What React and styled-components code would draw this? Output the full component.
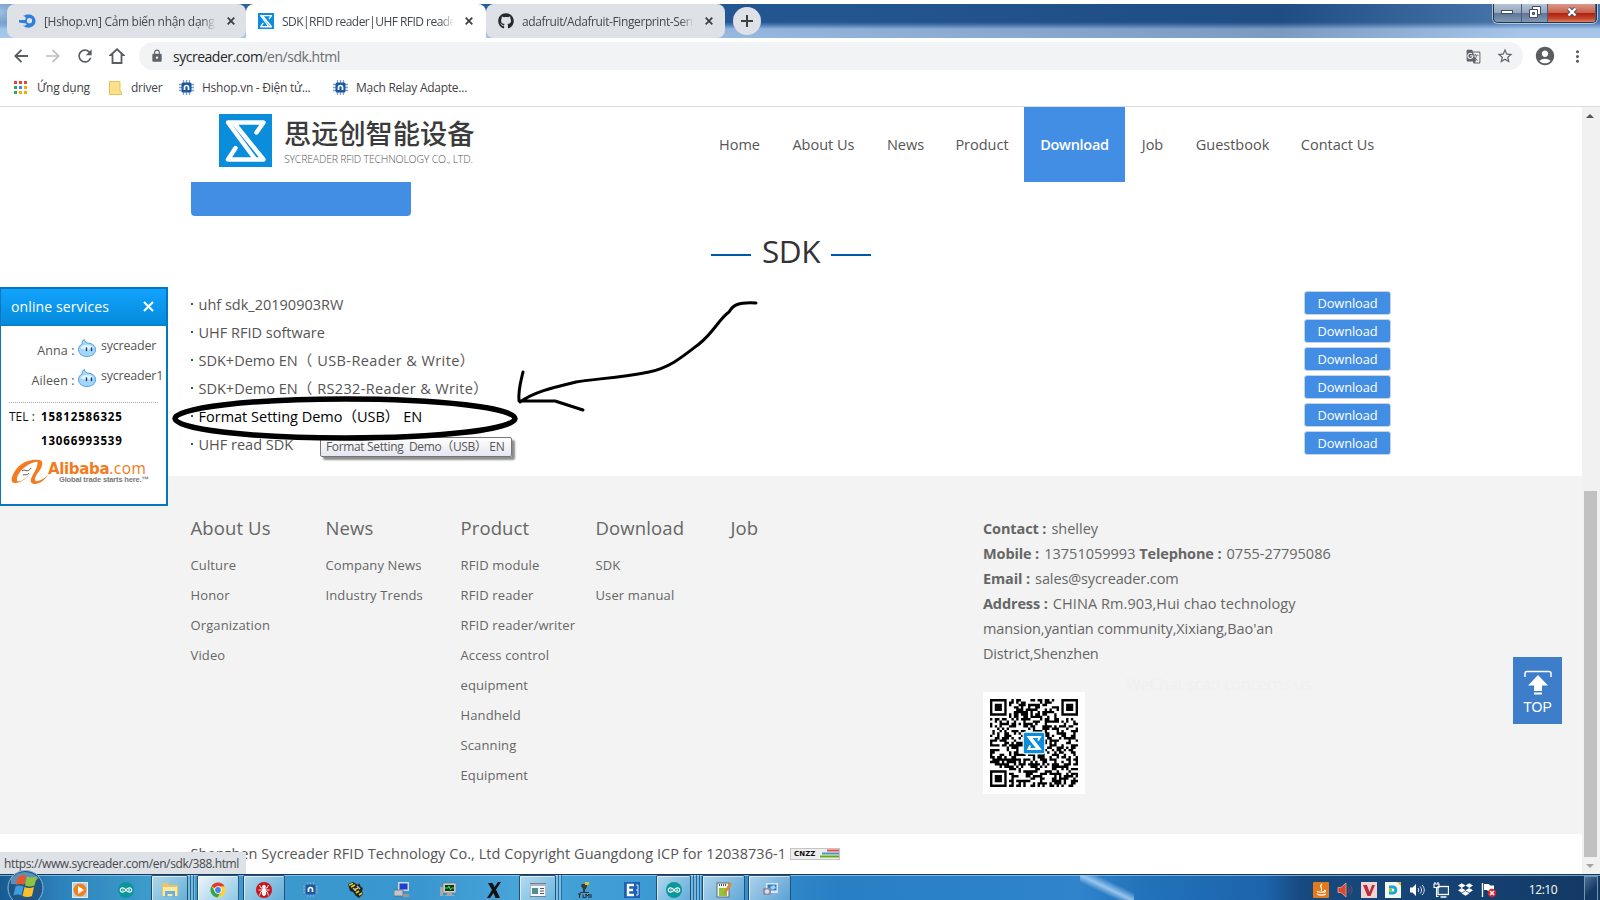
import React from 'react';
import styled, { createGlobalStyle, css } from 'styled-components';
import { FaGithub, FaDropbox } from 'react-icons/fa';
import { MdLock, MdStarBorder, MdAccountCircle, MdMoreVert, MdGTranslate, MdRefresh } from 'react-icons/md';

const Global = createGlobalStyle`
  *{box-sizing:border-box}
  body{margin:0;background:#fff;font-family:"Open Sans","Noto Sans","Noto Sans CJK SC",sans-serif;overflow:hidden}
  svg{display:block;flex:none}
`;

const Screen = styled.div`
  width:1600px;height:900px;display:flex;flex-direction:column;position:relative;overflow:hidden;padding-top:4px;
`;

/* ---------- browser chrome ---------- */
const TabStrip = styled.div`
  height:34px;display:flex;flex:none;padding-left:7px;
  background:
    radial-gradient(ellipse 40px 30px at 0 8px,#9dc0e4,transparent),
    linear-gradient(90deg,rgba(255,255,255,.06),transparent 30%,rgba(10,30,70,.25) 80%,rgba(180,200,225,.25) 95%),
    linear-gradient(#265c98 0,#265c98 18px,#4f82bb 21px,#9fc2ea 25px,#a4c6ed 34px);
`;
const Tab = styled.div`
  width:${p => p.$w}px;height:34px;display:flex;align-items:center;padding:0 0 0 12px;flex:none;
  background:${p => (p.$active ? '#fff' : '#dee1e6')};
  border-radius:${p => (p.$active ? '8px 8px 0 0' : '8px')};
  color:#45494d;font-size:12px;
`;
const TabTitle = styled.div`
  width:172px;margin-left:8px;white-space:nowrap;overflow:hidden;letter-spacing:${p => p.$ls || 0}px;
  mask-image:linear-gradient(90deg,#000 92%,transparent);
`;
const TabClose = styled.div`margin-left:11px;`;
const NewTab = styled.div`
  width:28px;height:28px;border-radius:14px;background:#dee1e6;margin:3px 0 0 8px;display:flex;align-items:center;justify-content:center;
`;
const WindowButtons = styled.div`
  display:flex;height:19px;width:104px;margin:0 3px 0 auto;border:1px solid #23364f;border-top:0;border-radius:0 0 5px 5px;overflow:hidden;
  box-shadow:0 0 0 1px rgba(255,255,255,.55);
`;
const WinBtn = styled.div`
  width:${p => p.$w}px;display:flex;align-items:center;justify-content:center;padding-bottom:2px;
  border-right:1px solid #4a5d78;
  background:${p => (p.$close
    ? 'linear-gradient(#d99a8d 0,#c9614c 48%,#ad2310 52%,#c5452a 80%,#dd8465)'
    : 'linear-gradient(#b5c3d5 0,#93a7c0 48%,#5e7799 52%,#8298b4)')};
`;
const Toolbar = styled.div`
  height:36px;flex:none;display:flex;align-items:center;background:#fff;padding-left:5px;
`;
const NavIcon = styled.div`
  width:32px;display:flex;justify-content:center;color:${p => (p.$dim ? '#bbbdc0' : '#5a5e62')};
`;
const Omnibox = styled.div`
  width:1384px;height:28px;margin-left:6px;border-radius:14px;background:#f1f3f4;display:flex;align-items:center;
  padding:0 2px 0 11px;color:#5f6368;font-size:14px;
`;
const Url = styled.div`
  margin-left:9px;flex:1;letter-spacing:-.48px;color:#6a6e72;
  b{font-weight:400;color:#26282b}
`;
const OmniIcon = styled.div`width:32px;display:flex;justify-content:center;`;
const SideIcon = styled.div`width:${p => p.$w}px;display:flex;justify-content:center;color:#5a5e62;`;
const Bookmarks = styled.div`
  height:33px;flex:none;display:flex;align-items:center;border-bottom:1px solid #dcdcdc;padding:0 0 5px 14px;font-size:12px;color:#3f4347;
`;
const Bookmark = styled.div`
  display:flex;align-items:center;width:${p => p.$w}px;gap:${p => p.$gap}px;letter-spacing:-.25px;white-space:nowrap;
`;

/* ---------- page ---------- */
const Viewport = styled.div`display:flex;height:767px;flex:none;`;
const Page = styled.div`width:1582px;display:flex;flex-direction:column;`;
const Container = styled.div`width:1200px;margin:0 auto;`;
const Header = styled.div`height:75px;display:flex;padding-left:28px;`;
const LogoText = styled.div`margin:7px 0 0 12px;width:246px;color:#3b3b3b;white-space:nowrap;`;
const LogoName = styled.div`font:500 27.200px/36px "Noto Sans CJK SC",sans-serif;`;
const LogoSub = styled.div`font:300 10.500px/12px "Open Sans",sans-serif;color:#555;letter-spacing:-.2px;margin-top:3px;`;
const Nav = styled.div`display:flex;margin-left:173px;`;
const NavItem = styled.div`
  width:${p => p.$w}px;height:75px;display:flex;align-items:center;justify-content:center;font-size:14.500px;white-space:nowrap;
  color:#555;letter-spacing:0;
  ${p => p.$on && css`background:#438ee5;color:#fff;font-weight:600;letter-spacing:-.28px;`}
`;
const BlueBar = styled.div`width:220px;height:34px;background:#438ee5;border-radius:0 0 4px 4px;`;
const Title = styled.div`
  height:71px;display:flex;align-items:center;justify-content:center;gap:11px;font-size:31.500px;color:#333;letter-spacing:-.4px;padding-bottom:2px;
`;
const Dash = styled.span`width:40px;height:2px;background:#0058a8;margin-top:8px;`;
const List = styled.div`height:189px;padding-top:3px;`;
const Row = styled.div`
  height:28px;display:flex;align-items:center;font-size:14.500px;color:${p => (p.$hover ? '#000' : '#555')};white-space:pre;
`;
const Dot = styled.span`width:2px;height:2px;background:#136a4a;margin:0 5.500px 0 0;`;
const RowText = styled.span`
  flex:1;height:20px;display:flex;line-height:20px;margin-top:2px;
`;
const Part = styled.span`
  letter-spacing:${p => p.$ls || 0}px;margin-left:${p => p.$ml || 0}px;height:20px;line-height:20px;
`;
const DownloadBtn = styled.span`
  width:87px;height:24px;margin-bottom:3px;border:1px solid #c9d3df;border-radius:3px;background:#438ee5;color:#fff;font-size:12.800px;
  font-weight:500;letter-spacing:-.1px;display:flex;align-items:center;justify-content:center;
`;
const Footer = styled.div`height:358px;background:#f3f3f3;`;
const FooterInner = styled(Container)`display:flex;padding-top:37px;`;
const Column = styled.div`width:135px;color:#666;`;
const ColHead = styled.div`font-size:18.500px;line-height:30px;margin:0 0 7px -.5px;letter-spacing:.12px;`;
const ColItem = styled.div`font-size:13px;line-height:30px;white-space:nowrap;letter-spacing:.13px;margin-left:-.5px;`;
const Contact = styled.div`margin-left:117px;width:400px;font-size:14.500px;color:#666;`;
const ContactLine = styled.div`
  height:25px;line-height:31px;white-space:nowrap;letter-spacing:${p => p.$ls || 0}px;
  b{letter-spacing:-.13px;margin-right:1.500px}
`;
const ScanHint = styled.div`height:29px;padding:11px 0 0 143px;font-size:16px;line-height:20px;color:#f0f0f0;white-space:nowrap;letter-spacing:-.2px;`;
const QrBox = styled.div`width:102px;height:102px;background:#fff;padding:7px;`;
const Copyright = styled.div`
  height:40px;padding:0 0 2px 190.500px;display:flex;align-items:center;gap:4px;font-size:14.500px;color:#555;white-space:nowrap;letter-spacing:.05px;
`;
const Cnzz = styled.div`
  width:50px;height:12px;background:#eee;border:1px solid #c4c4c4;display:flex;align-items:center;justify-content:space-between;
  font:700 7px/8px "DejaVu Sans",sans-serif;color:#111;padding-left:3px;margin-bottom:-1px;
`;
const Scrollbar = styled.div`
  width:18px;background:#f1f1f1;display:flex;flex-direction:column;align-items:center;justify-content:space-between;padding-right:2px;
`;
const ScrollThumb = styled.div`width:13px;height:366px;background:#c1c1c1;margin-top:auto;`;
const ScrollArrow = styled.div`height:17px;display:flex;align-items:center;`;

/* ---------- floating parts ---------- */
const Widget = styled.div`
  position:absolute;left:0;top:287px;width:168px;height:219px;background:#fff;border:2px solid #0478bd;border-left-width:1px;
`;
const WidgetHead = styled.div`
  height:37px;background:linear-gradient(#12a3fd,#048bdc);border-bottom:2px solid #0482cc;display:flex;align-items:center;
  justify-content:space-between;padding:0 12px 0 10px;color:#fff;font-size:14px;letter-spacing:.12px;
`;
const Agent = styled.div`
  display:flex;height:30px;font-size:12.500px;line-height:17px;color:#555;padding-top:7px;
`;
const AgentLabel = styled.span`width:77px;text-align:right;padding-top:9px;letter-spacing:.1px;white-space:pre;`;
const AgentName = styled.span`margin-left:5px;padding-top:4px;letter-spacing:-.2px;`;
const AgentIcon = styled.div`margin:6px 0 0 0;`;
const Tel = styled.div`
  height:24px;display:flex;align-items:center;padding-left:8px;font-size:12px;color:#111;
  b{font:700 11.500px "Noto Sans",sans-serif;color:#000;letter-spacing:.85px}
`;
const TelLabel = styled.span`width:32px;white-space:pre;`;
const Dotted = styled.div`width:149px;border-top:1px dotted #aaa;margin:16px 0 1px 8px;`;
const Alibaba = styled.div`display:flex;padding:6px 0 0 9px;`;
const AliWord = styled.div`
  font:700 15px/16px "DejaVu Sans",sans-serif;color:#f47a20;letter-spacing:-.35px;white-space:nowrap;margin:2px 0 0 0;
`;
const AliCom = styled.span`font-weight:400;font-size:15.500px;font-family:"Open Sans",sans-serif;letter-spacing:.5px;`;
const AliTag = styled.div`font:700 7.500px/8px "Liberation Sans",sans-serif;color:#777;letter-spacing:-.15px;margin:-1px 0 0 11px;`;
const TopButton = styled.div`
  position:absolute;left:1513px;top:657px;width:49px;height:67px;background:#3e7dca;color:#fff;display:flex;flex-direction:column;
  align-items:center;padding-top:13px;font:14px/18px "Liberation Sans",sans-serif;
`;
const Tooltip = styled.div`
  position:absolute;left:320px;top:437px;width:192px;height:20px;border:1px solid #767676;border-radius:2px;white-space:pre;
  background:linear-gradient(#fff,#e4e5f0);box-shadow:3px 3px 2px rgba(0,0,0,.45);font-size:12px;line-height:18px;color:#575757;padding-left:5px;
  letter-spacing:-.35px;
`;
const StatusBubble = styled.div`
  position:absolute;left:0;top:852px;width:246px;height:22px;background:#dee1e6;border-top-right-radius:3px;color:#45494d;font-size:12px;
  line-height:23px;padding-left:4px;letter-spacing:-.37px;
`;
const Ink = styled.svg`position:absolute;left:160px;top:290px;`;
const StartOrb = styled.svg`position:absolute;left:7px;top:868px;`;

/* ---------- taskbar ---------- */
const Taskbar = styled.div`
  height:26px;display:flex;flex:none;border-top:1px solid #173a5c;box-shadow:inset 0 1px 0 rgba(160,205,240,.7);
  background:
    linear-gradient(to top right,transparent 36%,rgba(190,222,250,.75) 50%,transparent 66%) 1080px 0/54px 26px no-repeat,
    linear-gradient(90deg,#175a92 0,#2d82bb 60px,#3d9ccc 150px,#3a96cf 420px,#47a5da 520px,#3793cf 720px,#287fc4 840px,#2f84cb 1080px,#2273ba 1140px,#1d64ac 1265px,#174a80 1300px,#143f6e 1500px,#123963 1600px);
`;
const Slot = styled.div`
  width:${p => p.$w}px;margin-left:${p => p.$m || 0}px;height:25px;display:flex;align-items:center;justify-content:center;padding-top:4px;
  ${p => p.$open && css`
    background:linear-gradient(135deg,rgba(255,255,255,.6),rgba(255,255,255,.22));
    border:1px solid rgba(10,50,90,.8);border-bottom:0;border-radius:2px 2px 0 0;box-shadow:inset 1px 1px 0 rgba(255,255,255,.6);`}
  ${p => p.$bright && css`background:linear-gradient(135deg,rgba(255,255,255,.9),rgba(200,230,245,.6));`}
`;
const Stack = styled.div`
  width:${p => p.$w}px;height:25px;background:repeating-linear-gradient(90deg,rgba(255,255,255,.3) 0 2px,rgba(10,60,100,.5) 2px 3px);
`;
const Tray = styled.div`margin-left:auto;display:flex;align-items:center;padding-top:4px;`;
const TrayIcon = styled.div`width:24px;display:flex;justify-content:center;color:#fff;`;
const Clock = styled.div`width:80px;margin-left:2px;text-align:center;color:#fff;font-size:12px;letter-spacing:-.45px;`;
const ShowDesktop = styled.div`width:14px;height:25px;margin:-3px 2px 0 1px;border:1px solid #7796b5;background:linear-gradient(135deg,#4c7299,#143a63 60%);`;

const Cross = ({ s = 8, c = '#3c4043', w = 1.8 }) => (
  <svg width={s} height={s} viewBox="0 0 8 8"><path d="M.7.7l6.6 6.6M7.3.7L.7 7.3" stroke={c} strokeWidth={w} /></svg>
);
const SycLogo = ({ s }) => (
  <svg width={s} height={s} viewBox="0 0 53 53">
    <rect width="53" height="53" fill="#0a8ddb" />
    <path d="M37.500 18.500L44.500 8.500H9L36 45M16.500 34L9 45.500H44.500L15 9" fill="none" stroke="#fff" strokeWidth="4.400" strokeLinecap="round" strokeLinejoin="round" />
  </svg>
);
const Chip = () => (
  <svg width="15" height="15" viewBox="0 0 15 15">
    <path d="M4.500 0v15M7.500 0v15M10.500 0v15M0 4.500h15M0 7.500h15M0 10.500h15" stroke="#7fa3cc" strokeWidth="1.300" />
    <rect x="2.500" y="2.500" width="10" height="10" rx="1.500" fill="#1c58a0" />
    <path d="M5.500 10V7.500a2 2 0 014 0V10" fill="none" stroke="#fff" strokeWidth="1.700" />
  </svg>
);
const Arduino = () => (
  <svg width="16" height="16" viewBox="0 0 16 16">
    <circle cx="8" cy="8" r="8" fill="#0a979c" />
    <path d="M8 8C6.500 5.500 2.300 5 2.300 8S6.500 10.500 8 8s5.700-3 5.700 0S9.500 10.500 8 8z" fill="none" stroke="#fff" strokeWidth="1.200" />
    <path d="M4 8h1.800M10.200 8H12M11.100 7.100v1.800" stroke="#fff" strokeWidth=".8" />
  </svg>
);
const ChromeIcon = () => (
  <svg width="16" height="16" viewBox="0 0 16 16">
    <circle cx="8" cy="8" r="7.500" fill="#fdd139" />
    <path d="M8 8L1.500 4.250A7.500 7.500 0 0114.500 4.250L8 4.500z" fill="#df3d30" />
    <path d="M1.500 4.250A7.500 7.500 0 007.500 15.500L11 9.700 5 9.800z" fill="#34a350" />
    <circle cx="8" cy="8" r="3.700" fill="#fff" /><circle cx="8" cy="8" r="2.900" fill="#4384f3" />
  </svg>
);
const Wangwang = () => (
  <svg width="18" height="18" viewBox="0 0 18 18">
    <path d="M9 4C8 2 6 3 6.500.500 4 1.500 4 3 4.500 4.500 2 6 .5 8 .5 10.500.500 15 4.500 17.500 9 17.500s8.500-2.500 8.500-7S13 4 9 4z" fill="#a6d5fb" stroke="#4d9fe0" />
    <path d="M2.500 9c2-4 10-4.500 13 0-3 2-9 2-13 0z" fill="#e4f4ff" />
    <path d="M8.500 9v2.500M13.500 9v2.500" stroke="#123a6a" strokeWidth="1.400" strokeLinecap="round" />
  </svg>
);
const AliMark = () => (
  <svg width="38" height="28" viewBox="0 0 38 28">
    <path d="M32 3C25 0 12 2 5 13c-5 8-4 12 0 12 6 0 12-5 15-9C12 24 6 26 7 20 9 12 20 3 32 3z" fill="#f4791f" />
    <path d="M27 2c8-1 6 7 0 14-3 5-3 8 1 7 4-1 8-4 10-6-4 7-14 12-17 7-2-5 9-14 6-22z" fill="#f4791f" />
    <path d="M12 13c3-3 5 3 9-3M13 17c3-1 4 1 6-2" fill="none" stroke="#555" />
  </svg>
);

/* Version 5 code: 37 modules a side with three finder marks */
const QR_SIZE = 37;
const qrPath = (() => {
  let seed = 91;
  let d = '';
  const finder = (x, y) => {
    const m = Math.max(Math.abs(x - 3), Math.abs(y - 3));
    return m === 3 || m <= 1;
  };
  for (let y = 0; y < QR_SIZE; y += 1) {
    for (let x = 0; x < QR_SIZE; x += 1) {
      seed = (seed * 1103515245 + 12345) % 2147483648;
      let on = ((seed >> 14) & 255) < 128;
      const fx = x < 8 ? x : x > 28 ? x - 30 : -9;
      const fy = y < 8 ? y : y > 28 ? y - 30 : -9;
      if (fx > -9 && fy > -9 && !(x > 28 && y > 28)) on = fx >= 0 && fx < 7 && fy >= 0 && fy < 7 && finder(fx, fy);
      if (on) d += `M${x} ${y}h1v1h-1z`;
    }
  }
  return d;
})();
const Qr = () => (
  <svg width="88" height="88" viewBox="0 0 37 37">
    <path d={qrPath} fill="#000" />
    <rect x="13.700" y="13.700" width="9.600" height="9.600" rx="1" fill="#dfeaf3" />
    <svg x="14.200" y="14.200" width="8.600" height="8.600" viewBox="0 0 53 53">
      <rect width="53" height="53" rx="4" fill="#0a8ddb" />
      <path d="M37 20L42 11H12L36 42M17 33L12 42H42L18 11" fill="none" stroke="#fff" strokeWidth="5" />
    </svg>
  </svg>
);

const nav = [['Home', 73], ['About Us', 95], ['News', 69], ['Product', 84], ['Download', 101], ['Job', 55], ['Guestbook', 105], ['Contact Us', 105]];

/* each file name is a list of [text, letter spacing, left gap] */
const files = [
  [['uhf sdk_20190903RW']],
  [['UHF RFID software']],
  [['SDK+Demo EN（'], ['USB-Reader & Write', 0.42, 5], ['）']],
  [['SDK+Demo EN（'], ['RS232-Reader & Write', 0.36, 5], ['）']],
  [['Format Setting Demo（USB） EN']],
  [['UHF read SDK']],
];
const columns = [
  ['About Us', ['Culture', 'Honor', 'Organization', 'Video']],
  ['News', ['Company News', 'Industry Trends']],
  ['Product', ['RFID module', 'RFID reader', 'RFID reader/writer', 'Access control', 'equipment', 'Handheld', 'Scanning', 'Equipment']],
  ['Download', ['SDK', 'User manual']],
  ['Job', []],
];

const Svg = ({ children, w = 16 }) => <svg width={w} height="16" viewBox={`0 0 ${w} 16`}>{children}</svg>;

export default function App() {
  return (
    <Screen>
      <Global />
      <TabStrip>
        <Tab $w={239}>
          <svg width="17" height="14" viewBox="0 0 17 14"><path d="M4 2C8-1 16 0 16.500 6.500 17 13 9 16 4 11.500 7 12 8 11 7 9.500L0 8.500V6h6C8 4 6 2 4 2z" fill="#2f80dc" /><circle cx="10.500" cy="6.700" r="2.600" fill="#dee1e6" /></svg>
          <TabTitle $ls={-0.32}>[Hshop.vn] Cảm biến nhận dạng v</TabTitle><TabClose><Cross /></TabClose>
        </Tab>
        <Tab $w={240} $active>
          <SycLogo s={16} /><TabTitle $ls={-0.54}>SDK|RFID reader|UHF RFID reader</TabTitle><TabClose><Cross /></TabClose>
        </Tab>
        <Tab $w={239}>
          <FaGithub size={16} color="#24292e" /><TabTitle $ls={-0.4}>adafruit/Adafruit-Fingerprint-Sens</TabTitle><TabClose><Cross /></TabClose>
        </Tab>
        <NewTab><svg width="12" height="12"><path d="M6 0v12M0 6h12" stroke="#3c4043" strokeWidth="2" /></svg></NewTab>
        <WindowButtons>
          <WinBtn $w={28}><svg width="12" height="4"><rect x=".5" y=".5" width="11" height="3" fill="#fff" stroke="#444b5c" /></svg></WinBtn>
          <WinBtn $w={27}><svg width="12" height="12"><path d="M3.500.500h8v8h-8z" fill="#fff" stroke="#444b5c" /><path d="M.5 3.500h8v8h-8z" fill="#fff" stroke="#444b5c" /><path d="M3.500 6.500h2v2h-2z" fill="#7488a5" stroke="#444b5c" /></svg></WinBtn>
          <WinBtn $w={48} $close><svg width="12" height="10" viewBox="0 0 12 10"><path d="M2.500 1.500l7 7M9.500 1.500l-7 7" stroke="#444b5c" strokeWidth="4" /><path d="M2.500 1.500l7 7M9.500 1.500l-7 7" stroke="#fff" strokeWidth="2.400" /></svg></WinBtn>
        </WindowButtons>
      </TabStrip>
      <Toolbar>
        <NavIcon><svg width="14" height="14"><path d="M14 7H1.500M7.500.800L1.300 7l6.200 6.200" fill="none" stroke="currentColor" strokeWidth="1.900" /></svg></NavIcon>
        <NavIcon $dim><svg width="14" height="14"><path d="M0 7h12.500M6.500.800L12.700 7l-6.200 6.200" fill="none" stroke="currentColor" strokeWidth="1.700" /></svg></NavIcon>
        <NavIcon><MdRefresh size={20} /></NavIcon>
        <NavIcon><svg width="16" height="16"><path d="M3.500 7v8h9V7h1.800L8 1.300 1.700 7z" fill="none" stroke="currentColor" strokeWidth="1.800" /></svg></NavIcon>
        <Omnibox>
          <MdLock size={14} /><Url><b>sycreader.com</b>/en/sdk.html</Url>
          <OmniIcon><MdGTranslate size={15} /></OmniIcon><OmniIcon><MdStarBorder size={18} /></OmniIcon>
        </Omnibox>
        <SideIcon $w={43}><MdAccountCircle size={22} /></SideIcon>
        <SideIcon $w={22}><MdMoreVert size={19} /></SideIcon>
      </Toolbar>
      <Bookmarks>
        <Bookmark $w={95} $gap={10}>
          <svg width="13" height="13"><g fill="#ea4335"><path d="M0 0h3v3H0zM5 0h3v3H5zM10 0h3v3h-3z" /></g><path d="M0 5h3v3H0z" fill="#34a853" /><path d="M5 5h3v3H5z" fill="#4285f4" /><path d="M10 5h3v3h-3zM5 10h3v3H5zM10 10h3v3h-3z" fill="#fbaa05" /><path d="M0 10h3v3H0z" fill="#34a853" /></svg>
          Ứng dụng
        </Bookmark>
        <Bookmark $w={70} $gap={9}><svg width="13" height="14"><path d="M.5.500h10.500v10l1.500.500v2.500H.5z" fill="#fbe08b" stroke="#e9c154" /></svg>driver</Bookmark>
        <Bookmark $w={154} $gap={8}><Chip />Hshop.vn - Điện tử...</Bookmark>
        <Bookmark $w={150} $gap={8}><Chip />Mạch Relay Adapte...</Bookmark>
      </Bookmarks>

      <Viewport>
        <Page>
          <Container>
            <Header>
              <svg width="53" height="60" viewBox="0 -7 53 60"><SycLogo s={53} /></svg>
              <LogoText><LogoName>思远创智能设备</LogoName><LogoSub>SYCREADER RFID TECHNOLOGY CO., LTD.</LogoSub></LogoText>
              <Nav>{nav.map(([t, w]) => <NavItem key={t} $w={w} $on={t === 'Download'}>{t}</NavItem>)}</Nav>
            </Header>
            <BlueBar />
            <Title><Dash />SDK<Dash /></Title>
            <List>
              {files.map((parts, i) => (
                <Row key={i} $hover={i === 4}>
                  <Dot />
                  <RowText>{parts.map(([t, ls, ml]) => <Part key={t} $ls={ls} $ml={ml}>{t}</Part>)}</RowText>
                  <DownloadBtn>Download</DownloadBtn>
                </Row>
              ))}
            </List>
          </Container>
          <Footer>
            <FooterInner>
              {columns.map(([h, items]) => (
                <Column key={h}><ColHead>{h}</ColHead>{items.map(t => <ColItem key={t}>{t}</ColItem>)}</Column>
              ))}
              <Contact>
                <ContactLine><b>Contact : </b>shelley</ContactLine>
                <ContactLine><b>Mobile : </b>13751059993 <b>Telephone : </b>0755-27795086</ContactLine>
                <ContactLine $ls={-0.12}><b>Email : </b>sales@sycreader.com</ContactLine>
                <ContactLine $ls={0.08}><b>Address : </b>CHINA Rm.903,Hui chao technology</ContactLine>
                <ContactLine $ls={-0.11}>mansion,yantian community,Xixiang,Bao'an</ContactLine>
                <ContactLine $ls={-0.16}>District,Shenzhen</ContactLine>
                <ScanHint>WeChat scan concerns us :</ScanHint>
                <QrBox><Qr /></QrBox>
              </Contact>
            </FooterInner>
          </Footer>
          <Copyright>
            Shenzhen Sycreader RFID Technology Co., Ltd Copyright Guangdong ICP for 12038736-1
            <Cnzz>CNZZ<svg width="20" height="9"><path d="M8 1.500h12" stroke="#f44" strokeWidth="2" /><path d="M3 4.500h17" stroke="#49c" strokeWidth="2" /><path d="M1 7.500h19" stroke="#6a1" strokeWidth="2" /></svg></Cnzz>
          </Copyright>
        </Page>
        <Scrollbar>
          <ScrollArrow><svg width="8" height="4"><path d="M0 4l4-4 4 4z" fill="#555" /></svg></ScrollArrow>
          <ScrollThumb />
          <ScrollArrow><svg width="8" height="4"><path d="M0 0l4 4 4-4z" fill="#a3a3a3" /></svg></ScrollArrow>
        </Scrollbar>
      </Viewport>

      <Taskbar>
        <Slot $w={52} />
        <Slot $w={46} $m={5}><Svg><rect x=".5" y=".5" width="15" height="15" fill="#b9d4ea" stroke="#e4f0f9" /><circle cx="8" cy="8" r="6.500" fill="#f2811d" /><path d="M6 4l6 4-6 4z" fill="#fff" /></Svg></Slot>
        <Slot $w={46}><Arduino /></Slot>
        <Slot $w={37} $m={2} $open><Svg><path d="M0 1h6l1 2h9v11H0z" fill="#e8c565" /><path d="M1 5h14v9H1z" fill="#fbe9a5" /><path d="M3 15V9h10v6h-2.500v-3h-5v3z" fill="#6bb0dc" /></Svg></Slot>
        <Stack $w={7} />
        <Slot $w={42} $m={2} $open $bright><ChromeIcon /></Slot>
        <Slot $w={42} $m={4} $open><Svg><circle cx="8" cy="8" r="8" fill="#c8141c" /><ellipse cx="8" cy="10" rx="2.200" ry="4" fill="#fff" /><circle cx="8" cy="4.500" r="1.700" fill="#fff" /><path d="M3.500 3l1.500 3 6 0 1.500-3M3.500 13.500l1.500-4h6l1.500 4M2.500 8l3 0 5 0 3 0" fill="none" stroke="#fff" strokeWidth=".9" /></Svg></Slot>
        <Slot $w={46} $m={2}><Chip /></Slot>
        <Slot $w={46}><Svg><path d="M0 2l5-2 5 3 1-2 2 4 2 1-1 3 1 3-4 4-3-2-3-4-3-1z" fill="#23231c" /><path d="M1 3l4-1.500M3 5l4-2M6 8l4-2M8 11l3-2M11 13l3-2" stroke="#d9cf2a" strokeWidth="1.600" /><path d="M5 6l3 3M9 4l3 3" stroke="#b9bbb0" strokeWidth="1.300" /></Svg></Slot>
        <Slot $w={45}><Svg><rect x="4" y="0" width="11" height="9" fill="#d5d9dd" /><rect x="5.500" y="1.500" width="8" height="6" fill="#1b3fd0" /><rect x="0" y="8" width="9" height="6" fill="#c2c6ca" stroke="#555" strokeWidth=".6" /><path d="M9 12h6v3H9z" fill="#999" /></Svg></Slot>
        <Slot $w={48}><Svg><rect x="3" y="1" width="13" height="10" fill="#c9cdc9" stroke="#666" strokeWidth=".6" /><rect x="5" y="3" width="9" height="6" fill="#12351a" /><path d="M5 6h3l1-2 1.500 4 1-2H14" stroke="#39e05a" fill="none" /><path d="M7 11h5v2h2v1H5v-1h2zM0 5h3v9H0z" fill="#a5a9a5" /></Svg></Slot>
        <Slot $w={43}><Svg><path d="M2 1h4.500L8.500 5 12 0h3l-5 7.500L14 16H9.500L7.500 11 4 16H1l5-8z" fill="#111" /></Svg></Slot>
        <Slot $w={37} $m={4} $open><Svg><rect x="0" y="1.500" width="16" height="13" fill="#f5f6f8" stroke="#777f8a" /><path d="M1 2h14v2H1z" fill="#a8b6c6" /><path d="M2 6h6v6H2z" fill="#4f8f8f" /><path d="M10 6.500h4M10 9h4M10 11.500h4" stroke="#556" /></Svg></Slot>
        <Stack $w={6} />
        <Slot $w={46}><Svg><path d="M5 2h5v3L8 8v2h4v1H3v-1h3V7L4 4z" fill="#3b3b36" /><path d="M8 0h4v3H8z" fill="#e2c51f" /><path d="M1 12h3M2.500 12v4M6 12.500v3h2M9 16v-4l1.500 2 1.500-2v4M14 12v4" stroke="#222" fill="none" /></Svg></Slot>
        <Slot $w={47}><Svg><rect width="16" height="16" fill="#1c5fb4" /><path d="M10 3H4v10h6M4 8h5" stroke="#fff" strokeWidth="2.400" fill="none" /><path d="M12 3h2v10h-2M12 8h2" stroke="#cfe0f4" fill="none" /></Svg></Slot>
        <Slot $w={35} $m={1} $open><Arduino /></Slot>
        <Stack $w={10} />
        <Slot $w={43} $m={1} $open><Svg><rect x="1" y="1" width="12" height="14" fill="#f4f6f0" stroke="#667" /><path d="M3 6h8v8H3z" fill="#8cc63f" /><path d="M3 3h8" stroke="#555" strokeDasharray="1 1" strokeWidth="2" /><path d="M15 1L8 12" stroke="#e38b20" strokeWidth="2.500" /></Svg></Slot>
        <Slot $w={43} $m={3} $open><Svg><rect x="4" y="1" width="12" height="10" fill="#dbe8f3" /><rect x="5.500" y="2.500" width="9" height="6" fill="#2f7fc8" /><path d="M8 5l4-2 2 3-4 2z" fill="#9fd0ef" /><rect x="1" y="6" width="8" height="7" rx="1" fill="#8a90a0" /><circle cx="5" cy="9.500" r="2.200" fill="#dde" /></Svg></Slot>
        <Tray>
          <TrayIcon><Svg><rect width="16" height="16" rx="1" fill="#e57a1c" /><path d="M9 2c-4 3 2 4-1 7M4 9.500c2 1 6 1 7 0M4 12c3 1.500 7 1 9 0M11 8.500c2-1 2 1 0 2" fill="none" stroke="#fff" strokeWidth="1.200" /></Svg></TrayIcon>
          <TrayIcon><Svg><path d="M1 5.500h3L9 1v14l-5-4.500H1z" fill="#d9482e" stroke="#f3b6a6" strokeWidth=".7" /><path d="M11 5c1.500 2 1.500 4 0 6M13.500 3.500c2 3 2 6 0 9" fill="none" stroke="#8c4a50" /></Svg></TrayIcon>
          <TrayIcon><Svg><rect width="16" height="16" fill="#f1d5d5" /><path d="M2 3h4l2.500 7L11 3h3L9.500 14h-3z" fill="#b8303a" /></Svg></TrayIcon>
          <TrayIcon><Svg><rect width="16" height="16" fill="#f3f7ee" /><path d="M4 3.500h4.500c5 0 5 9 0 9H4V9.500h4.500c1 0 1-3 0-3H4z" fill="#16a6d8" /><path d="M4 6.500h3v3H4z" fill="#8cc63f" /><path d="M12 0h4v4z" fill="#e5b82e" /></Svg></TrayIcon>
          <TrayIcon><Svg><path d="M1 5.500h2.500L7 2v12l-3.500-3.500H1z" fill="#fff" /><path d="M9 6c1 1.300 1 2.700 0 4M11 4.500c2 2 2 5 0 7M13 3c3 3 3 7 0 10" fill="none" stroke="#dfe8f0" /></Svg></TrayIcon>
          <TrayIcon><Svg><rect x="5" y="4.500" width="10.500" height="8" fill="#234e7c" stroke="#fff" strokeWidth="1.300" /><path d="M7.500 15h6" stroke="#fff" strokeWidth="1.500" /><path d="M1 2h5v3.500H1zM2 0v2M5 0v2M3.500 5v9.500h2" stroke="#fff" fill="none" strokeWidth="1.100" /></Svg></TrayIcon>
          <TrayIcon><FaDropbox size={15} /></TrayIcon>
          <TrayIcon><Svg><path d="M1.500 1v14" stroke="#fff" strokeWidth="1.400" /><path d="M3 2h5l1 1.500h4V9H7L6 8H3z" fill="#fff" /><circle cx="11" cy="11" r="4.300" fill="#d9242b" /><path d="M9 9l4 4M13 9l-4 4" stroke="#fff" strokeWidth="1.500" /></Svg></TrayIcon>
          <Clock>12:10</Clock>
          <ShowDesktop />
        </Tray>
      </Taskbar>

      <Widget>
        <WidgetHead>online services<Cross s={11} c="#fff" w={1.5} /></WidgetHead>
        <Agent><AgentLabel>Anna : </AgentLabel><AgentIcon><Wangwang /></AgentIcon><AgentName>sycreader</AgentName></Agent>
        <Agent><AgentLabel>Aileen : </AgentLabel><AgentIcon><Wangwang /></AgentIcon><AgentName>sycreader1</AgentName></Agent>
        <Dotted />
        <Tel><TelLabel>TEL : </TelLabel><b>15812586325</b></Tel>
        <Tel><TelLabel /><b>13066993539</b></Tel>
        <Alibaba><AliMark /><AliWord>Alibaba<AliCom>.com</AliCom><AliTag>Global trade starts here.™</AliTag></AliWord></Alibaba>
      </Widget>
      <Tooltip>Format Setting  Demo（USB） EN</Tooltip>
      <TopButton>
        <svg width="28" height="28" viewBox="0 0 28 28"><path d="M1 7V3.500Q1 1.500 3 1.500H25Q27 1.500 27 3.500V7" fill="none" stroke="#fff" strokeWidth="1.500" /><path d="M14 5l10 10.500h-6V21h-8v-5.500H4zM10 22.500h8v2h-8z" fill="#fff" /></svg>
        TOP
      </TopButton>
      <StatusBubble>https://www.sycreader.com/en/sdk/388.html</StatusBubble>
      <Ink width="620" height="160" viewBox="160 290 620 160" fill="none" stroke="#000" strokeLinejoin="round" strokeLinecap="round">
        <ellipse cx="345" cy="418.500" rx="170" ry="19.500" strokeWidth="5.500" />
        <path d="M756 303c-18-1-23 2-27 9-10 7-15 20-30 32-18 14-30 24-50 28-28 6-58 7-73 10-25 6-42 10-56 20M523 372c-2 9-5 17-4 29h36l28 9" strokeWidth="3" />
      </Ink>
      <StartOrb width="38" height="32" viewBox="0 0 38 32">
        <circle cx="18.500" cy="20" r="17.500" fill="#1e5686" stroke="#8ab9dc" />
        <path d="M4 10Q18-2 32 10Q26 17 4 16z" fill="#8eb6d2" opacity=".6" />
        <path d="M11 9q4-3 8-1l-2 9q-4-2-8 0z" fill="#e8562a" /><path d="M20 8.500q5 2 10 0l-2.500 9q-4.500 2-9.500 0z" fill="#8cc540" />
        <path d="M8.500 18.500q4-2 8 0l-2 9q-4-2-8 0z" fill="#3d9fe0" /><path d="M17.500 19q4.500 2 9.500 0l-2 9q-4.500 2-9.500 0z" fill="#fbc02c" />
      </StartOrb>
    </Screen>
  );
}
